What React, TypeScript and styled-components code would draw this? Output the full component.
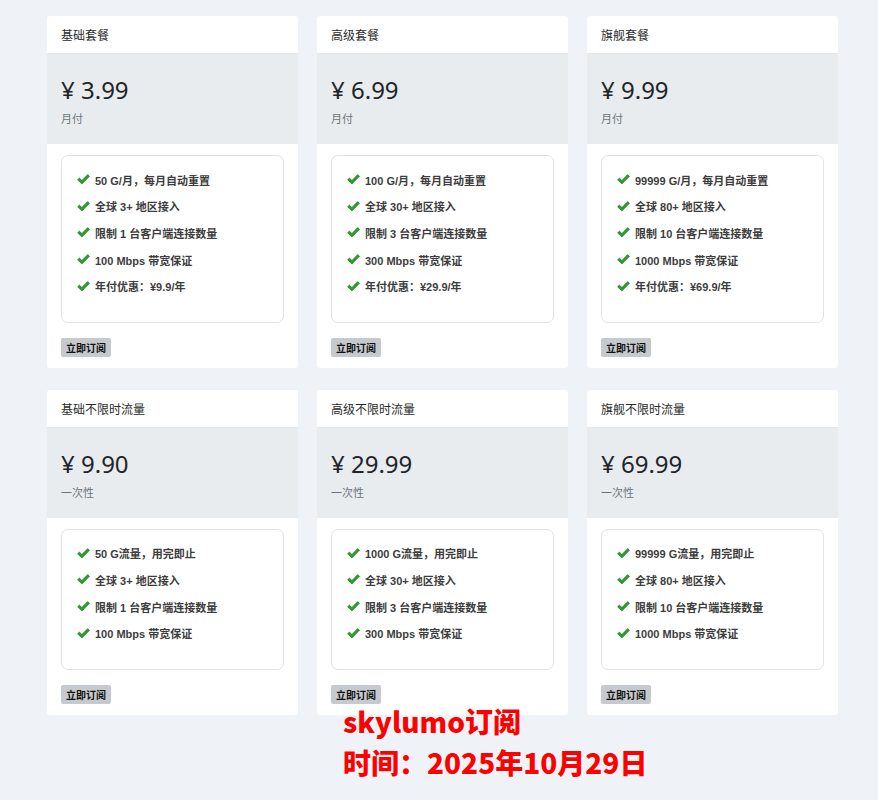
import React from "react";
import styled, { createGlobalStyle } from "styled-components";

interface Plan {
  title: string;
  price: string;
  period: string;
  features: string[];
}

const plans: Plan[] = [
  {
    title: "基础套餐",
    price: "3.99",
    period: "月付",
    features: ["50 G/月，每月自动重置", "全球 3+ 地区接入", "限制 1 台客户端连接数量", "100 Mbps 带宽保证", "年付优惠：¥9.9/年"],
  },
  {
    title: "高级套餐",
    price: "6.99",
    period: "月付",
    features: ["100 G/月，每月自动重置", "全球 30+ 地区接入", "限制 3 台客户端连接数量", "300 Mbps 带宽保证", "年付优惠：¥29.9/年"],
  },
  {
    title: "旗舰套餐",
    price: "9.99",
    period: "月付",
    features: ["99999 G/月，每月自动重置", "全球 80+ 地区接入", "限制 10 台客户端连接数量", "1000 Mbps 带宽保证", "年付优惠：¥69.9/年"],
  },
  {
    title: "基础不限时流量",
    price: "9.90",
    period: "一次性",
    features: ["50 G流量，用完即止", "全球 3+ 地区接入", "限制 1 台客户端连接数量", "100 Mbps 带宽保证"],
  },
  {
    title: "高级不限时流量",
    price: "29.99",
    period: "一次性",
    features: ["1000 G流量，用完即止", "全球 30+ 地区接入", "限制 3 台客户端连接数量", "300 Mbps 带宽保证"],
  },
  {
    title: "旗舰不限时流量",
    price: "69.99",
    period: "一次性",
    features: ["99999 G流量，用完即止", "全球 80+ 地区接入", "限制 10 台客户端连接数量", "1000 Mbps 带宽保证"],
  },
];

// bold check mark, font-icon style
const CheckIcon = () => (
  <svg width="13" height="11" viewBox="0 0 13 11">
    <path
      d="M0.6 5.8 L2.4 4.1 L4.9 6.5 L10.7 0.6 L12.5 2.3 L4.9 10 Z"
      fill="#27a327"
      stroke="#17661a"
      strokeWidth="0.6"
      strokeLinejoin="round"
    />
  </svg>
);

const PlanCard: React.FC<{ plan: Plan }> = ({ plan }) => (
  <Card>
    <CardHeader>{plan.title}</CardHeader>
    <PriceBox>
      <Price>¥ {plan.price}</Price>
      <Period>{plan.period}</Period>
    </PriceBox>
    <CardBody>
      <FeatureBox>
        {plan.features.map((f) => (
          <Feature key={f}>
            <CheckIcon />
            <span>{f}</span>
          </Feature>
        ))}
      </FeatureBox>
      <BuyButton>立即订阅</BuyButton>
    </CardBody>
  </Card>
);

export default function App() {
  return (
    <>
      <GlobalStyle />
      <Page>
        <Grid>
          {plans.map((p) => (
            <PlanCard key={p.title} plan={p} />
          ))}
        </Grid>
        <Watermark>
          <div>skylumo订阅</div>
          <div>时间：2025年10月29日</div>
        </Watermark>
      </Page>
    </>
  );
}

const GlobalStyle = createGlobalStyle`
  body {
    margin: 0;
    background: #eff2f7;
    font-family: "Liberation Sans", "Noto Sans CJK SC", sans-serif;
  }
`;

const Page = styled.div`
  position: relative;
  height: 800px;
  padding: 16px 40px 0 47px;
  box-sizing: border-box;
`;

const Grid = styled.div`
  display: grid;
  grid-template-columns: repeat(3, 251px);
  column-gap: 19px;
  row-gap: 22px;
`;

const Card = styled.div`
  background: #fff;
  border-radius: 3px;
  display: flex;
  flex-direction: column;
`;

const CardHeader = styled.div`
  height: 38px;
  padding: 0 14px;
  display: flex;
  align-items: center;
  font-family: "Noto Sans CJK SC", sans-serif;
  font-size: 12px;
  color: #2b2b2b;
  border-bottom: 1px solid #e3e6ea;
  box-sizing: border-box;
`;

const PriceBox = styled.div`
  height: 90px;
  background: #e9ecef;
  padding: 20px 14px 0;
  box-sizing: border-box;
`;

const Price = styled.div`
  font-family: "Noto Sans", "Noto Sans CJK SC", sans-serif;
  font-size: 24px;
  line-height: 32px;
  color: #212529;
`;

const Period = styled.div`
  margin-top: 4px;
  font-family: "Noto Sans CJK SC", sans-serif;
  font-size: 11px;
  color: #6c757d;
`;

const CardBody = styled.div`
  padding: 11px 14px 11px;
`;

const FeatureBox = styled.div`
  border: 1px solid #dfe2e6;
  border-radius: 7px;
  padding: 15px 15px 27px;
  display: flex;
  flex-direction: column;
  gap: 9.7px;
`;

const Feature = styled.div`
  display: flex;
  align-items: center;
  gap: 5px;
  height: 17px;
  font-family: "Liberation Sans", "Noto Sans CJK SC", sans-serif;
  font-size: 11px;
  font-weight: bold;
  color: #3d3d3d;
`;

const BuyButton = styled.button`
  margin-top: 15px;
  height: 19px;
  padding: 0 5px;
  border: none;
  border-radius: 2px;
  background: #c6c9cd;
  font-family: "Noto Sans CJK SC", sans-serif;
  font-size: 10px;
  font-weight: bold;
  color: #111;
  display: block;
`;

const Watermark = styled.div`
  position: absolute;
  left: 343px;
  top: 701px;
  font-family: "Noto Sans CJK SC", sans-serif;
  font-weight: 900;
  font-size: 28px;
  line-height: 41px;
  color: #ff0000;
  text-shadow: 0 0 2px #fff, 0 0 2px #fff, 0 0 3px #fff;
`;
